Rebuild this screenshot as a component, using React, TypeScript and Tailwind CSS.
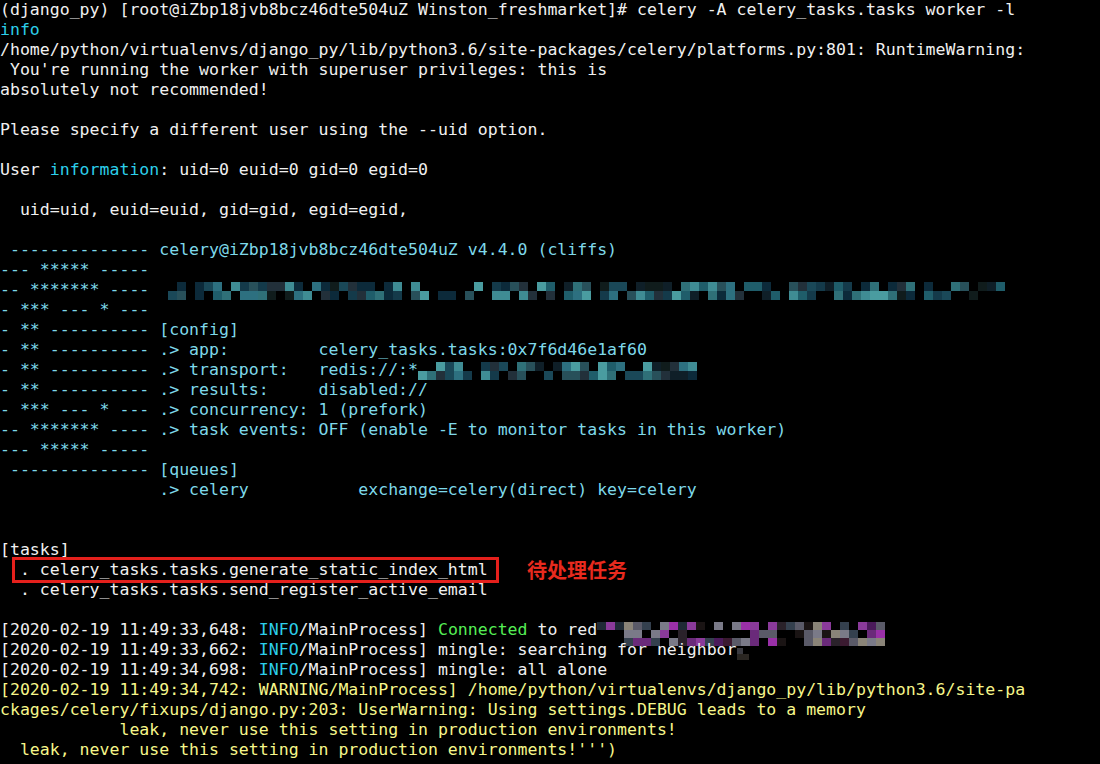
import React from 'react';

type Seg = [string, string];

const W = '#f0f0f0';
const C = '#2ccfea';
const B = '#7ed9ea';
const G = '#55ee55';
const Y = '#f6f68a';

const teal = ['#1f5d6a', '#2d7080', '#3f8c94', '#143a4a', '#0c2a3a', '#2f7078', '#4a9ca0', '#1a4858', '#28505a', '#0f1f28', '#22303a', '#101c1c'];
const purple = ['#6a2a7a', '#4a1a5a', '#8a3a9a', '#2a222a', '#5a5a68', '#7a7a88', '#1f2a36', '#3a1a30', '#9a30a8', '#34404e', '#8a8478', '#1a1414'];

function Mosaic({ w, seed, palette, rows = 2, cell = 9, bh = 8, top = 3, density = 0.6 }: {
  w: number; seed: number; palette: string[]; rows?: number; cell?: number; bh?: number; top?: number; density?: number;
}) {
  let s = seed;
  const rnd = () => {
    s = (s * 9301 + 49297) % 233280;
    return s / 233280;
  };
  const cols = Math.floor(w / cell);
  const rects: React.ReactElement[] = [];
  for (let r = 0; r < rows; r++) {
    for (let c = 0; c < cols; c++) {
      if (rnd() < density) {
        const col = palette[Math.floor(rnd() * palette.length)];
        rects.push(<rect key={r + '-' + c} x={c * cell} y={top + r * bh} width={cell} height={bh} fill={col} />);
      }
    }
  }
  return (
    <svg width={w} height={20} className="inline-block align-top overflow-visible" shapeRendering="crispEdges">
      {rects}
    </svg>
  );
}

const Line = ({ segs, children }: { segs?: Seg[]; children?: React.ReactNode }) => (
  <div className="h-[20px] leading-[20px] whitespace-pre relative">
    {segs?.map(([t, c], i) => (
      <span key={i} style={{ color: c }}>{t}</span>
    ))}
    {children}
  </div>
);

export default function App() {
  return (
    <div className="w-[1100px] h-[764px] bg-black overflow-hidden font-['DejaVu_Sans_Mono',monospace] text-[16.55px]">
      <Line segs={[['(django_py) [root@iZbp18jvb8bcz46dte504uZ Winston_freshmarket]# celery -A celery_tasks.tasks worker -l', W]]} />
      <Line segs={[['info', C]]} />
      <Line segs={[['/home/python/virtualenvs/django_py/lib/python3.6/site-packages/celery/platforms.py:801: RuntimeWarning:', W]]} />
      <Line segs={[[" You're running the worker with superuser privileges: this is", W]]} />
      <Line segs={[['absolutely not recommended!', W]]} />
      <Line />
      <Line segs={[['Please specify a different user using the --uid option.', W]]} />
      <Line />
      <Line segs={[['User ', W], ['information', C], [': uid=0 euid=0 gid=0 egid=0', W]]} />
      <Line />
      <Line segs={[['  uid=uid, euid=euid, gid=gid, egid=egid,', W]]} />
      <Line />
      <Line segs={[[' -------------- celery@iZbp18jvb8bcz46dte504uZ v4.4.0 (cliffs)', B]]} />
      <Line segs={[['--- ***** -----', B]]} />
      <Line segs={[['-- ******* ---- ', B]]}>
        <Mosaic w={853} seed={17} palette={teal} rows={2} cell={9} bh={9} top={2} density={0.68} />
      </Line>
      <Line segs={[['- *** --- * ---', B]]} />
      <Line segs={[['- ** ---------- [config]', B]]} />
      <Line segs={[['- ** ---------- .> app:         celery_tasks.tasks:0x7f6d46e1af60', B]]} />
      <Line segs={[['- ** ---------- .> transport:   redis://:*', B]]}>
        <Mosaic w={280} seed={41} palette={teal} rows={2} cell={9} bh={9} top={2} density={0.7} />
      </Line>
      <Line segs={[['- ** ---------- .> results:     disabled://', B]]} />
      <Line segs={[['- *** --- * --- .> concurrency: 1 (prefork)', B]]} />
      <Line segs={[['-- ******* ---- .> task events: OFF (enable -E to monitor tasks in this worker)', B]]} />
      <Line segs={[['--- ***** -----', B]]} />
      <Line segs={[[' -------------- [queues]', B]]} />
      <Line segs={[['                .> celery           exchange=celery(direct) key=celery', B]]} />
      <Line />
      <Line />
      <Line segs={[['[tasks]', W]]} />
      <Line segs={[['  . celery_tasks.tasks.generate_static_index_html', W]]}>
        <div className="absolute left-[12px] top-[-3px] w-[487px] h-[26px] border-[3px] border-[#e5201c]" />
        <span className="absolute left-[527px] top-[-1px] text-[20px] font-bold text-[#e82a1e] font-['Noto_Sans_CJK_SC',sans-serif] leading-[22px]">待处理任务</span>
      </Line>
      <Line segs={[['  . celery_tasks.tasks.send_register_active_email', W]]} />
      <Line />
      <Line segs={[['[2020-02-19 11:49:33,648: ', W], ['INFO', C], ['/MainProcess] ', W], ['Connected', G], [' to red', W]]}>
        <Mosaic w={292} seed={7} palette={purple} rows={3} cell={9} bh={8} top={2} density={0.6} />
      </Line>
      <Line segs={[['[2020-02-19 11:49:33,662: ', W], ['INFO', C], ['/MainProcess] mingle: searching for neighbor', W]]}>
        <Mosaic w={12} seed={3} palette={['#3a3a40', '#2a2622']} rows={2} cell={6} bh={6} top={8} density={0.9} />
      </Line>
      <Line segs={[['[2020-02-19 11:49:34,698: ', W], ['INFO', C], ['/MainProcess] mingle: all alone', W]]} />
      <Line segs={[['[2020-02-19 11:49:34,742: WARNING/MainProcess] /home/python/virtualenvs/django_py/lib/python3.6/site-pa', Y]]} />
      <Line segs={[['ckages/celery/fixups/django.py:203: UserWarning: Using settings.DEBUG leads to a memory', Y]]} />
      <Line segs={[['            leak, never use this setting in production environments!', Y]]} />
      <Line segs={[["  leak, never use this setting in production environments!''')", Y]]} />
    </div>
  );
}
